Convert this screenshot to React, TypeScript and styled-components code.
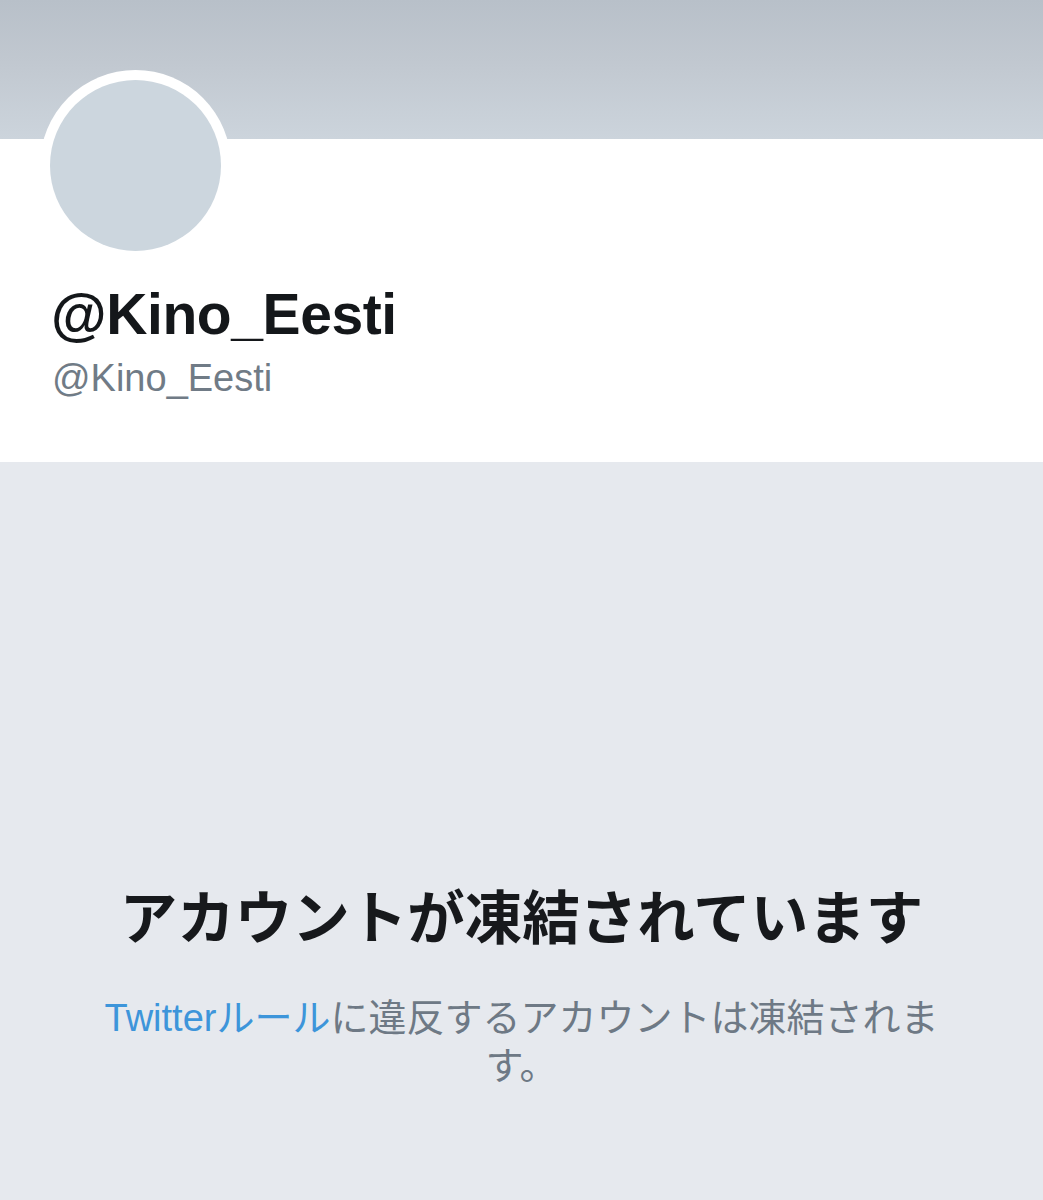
import React from "react";
import styled, { createGlobalStyle } from "styled-components";

const Global = createGlobalStyle`
  html, body { margin: 0; padding: 0; background: #e6e9ee; }
  body { font-family: "Liberation Sans", "Noto Sans CJK JP", sans-serif; }
  * { box-sizing: border-box; }
`;

const Page = styled.div`
  width: 100%;
  min-height: 1200px;
  display: flex;
  flex-direction: column;
  background: #e6e9ee;
`;

const Banner = styled.div`
  height: 139px;
  background: linear-gradient(180deg, #b8c0c9 0%, #c1c8d0 45%, #ccd4dc 100%);
`;

const Profile = styled.section`
  height: 323px;
  background: #ffffff;
  padding-left: 40px;
  display: flex;
  flex-direction: column;
`;

const AvatarRing = styled.div`
  width: 191px;
  height: 191px;
  margin-top: -69px;
  border-radius: 50%;
  background: #ffffff;
  padding: 10px;
`;

const AvatarFill = styled.div`
  width: 100%;
  height: 100%;
  border-radius: 50%;
  background: #ccd6de;
`;

const Name = styled.h1`
  margin: 19px 0 0 11px;
  font-family: "Liberation Sans", "Noto Sans", sans-serif;
  font-weight: 700;
  font-size: 57px;
  line-height: 1.2;
  letter-spacing: -0.4px;
  color: #14171a;
`;

const Handle = styled.div`
  margin: 8px 0 0 12px;
  font-family: "Liberation Sans", "Noto Sans", sans-serif;
  font-size: 38px;
  line-height: 1.2;
  color: #707b86;
`;

const Notice = styled.section`
  flex: 1;
  padding-top: 423px;
  display: flex;
  flex-direction: column;
  align-items: center;
  text-align: center;
`;

const Title = styled.h2`
  margin: 0;
  font-family: "Liberation Sans", "Noto Sans CJK JP", sans-serif;
  font-weight: 700;
  font-size: 57.5px;
  line-height: 1.2;
  color: #17191c;
`;

const Body = styled.p`
  margin: 40px 0 0;
  max-width: 860px;
  font-family: "Liberation Sans", "Noto Sans CJK JP", sans-serif;
  font-size: 38px;
  line-height: 48px;
  color: #6e7985;
`;

const RuleLink = styled.a`
  color: #3d95da;
  text-decoration: none;
`;

export default function App() {
  return (
    <>
      <Global />
      <Page>
        <Banner />
        <Profile>
          <AvatarRing>
            <AvatarFill />
          </AvatarRing>
          <Name>@Kino_Eesti</Name>
          <Handle>@Kino_Eesti</Handle>
        </Profile>
        <Notice>
          <Title>アカウントが凍結されています</Title>
          <Body>
            <RuleLink href="#">Twitterルール</RuleLink>に違反するアカウントは凍結されます。
          </Body>
        </Notice>
      </Page>
    </>
  );
}
